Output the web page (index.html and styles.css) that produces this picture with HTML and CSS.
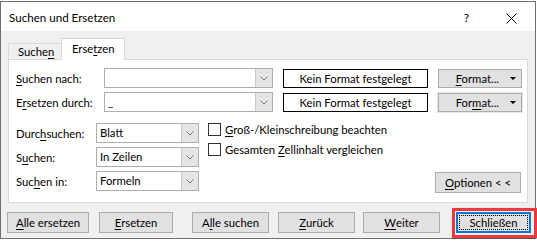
FILE: index.html
```html
<!DOCTYPE html>
<html lang="de">
<head>
    <meta charset="UTF-8" />
    <title>Suchen und Ersetzen</title>
    <link rel="stylesheet" href="styles.css">
</head>
<body>
    <div class="dialog">
        <div class="titlebar">
            <span class="title">Suchen und Ersetzen</span>
            <span class="help">?</span>
            <svg class="close" width="11" height="11" viewBox="0 0 11 11">
                <path d="M0.5 0.5 L10.5 10.5 M10.5 0.5 L0.5 10.5" stroke="#000" stroke-width="1" fill="none"/>
            </svg>
        </div>

        <div class="tabs">
            <div class="tab">Suche<u>n</u></div>
            <div class="tab active">Erse<u>t</u>zen</div>
        </div>

        <div class="panel">
            <div class="row">
                <label class="lbl"><u>S</u>uchen nach:</label>
                <div class="combo">
                    <span class="combo-text"></span>
                    <span class="drop"><svg width="8" height="5" viewBox="0 0 8 5"><path d="M0.5 0.5 L4 4 L7.5 0.5" stroke="#7a7a7a" fill="none"/></svg></span>
                </div>
                <div class="fmt-box">Kein Format festgelegt</div>
                <div class="btn fmt-btn"><span><u>F</u>ormat...</span><span class="tri"></span></div>
            </div>
            <div class="row">
                <label class="lbl">E<u>r</u>setzen durch:</label>
                <div class="combo">
                    <span class="combo-text">_</span>
                    <span class="drop"><svg width="8" height="5" viewBox="0 0 8 5"><path d="M0.5 0.5 L4 4 L7.5 0.5" stroke="#7a7a7a" fill="none"/></svg></span>
                </div>
                <div class="fmt-box">Kein Format festgelegt</div>
                <div class="btn fmt-btn second"><span>For<u>m</u>at...</span><span class="tri"></span></div>
            </div>

            <div class="lower">
                <div class="fields">
                    <div class="frow">
                        <label class="lbl2">Durc<u>h</u>suchen:</label>
                        <div class="select"><span class="combo-text">Blatt</span><span class="drop"><svg width="8" height="5" viewBox="0 0 8 5"><path d="M0.5 0.5 L4 4 L7.5 0.5" stroke="#7a7a7a" fill="none"/></svg></span></div>
                    </div>
                    <div class="frow">
                        <label class="lbl2">S<u>u</u>chen:</label>
                        <div class="select"><span class="combo-text">In Zeilen</span><span class="drop"><svg width="8" height="5" viewBox="0 0 8 5"><path d="M0.5 0.5 L4 4 L7.5 0.5" stroke="#7a7a7a" fill="none"/></svg></span></div>
                    </div>
                    <div class="frow">
                        <label class="lbl2">Suc<u>h</u>en in:</label>
                        <div class="select"><span class="combo-text">Formeln</span><span class="drop"><svg width="8" height="5" viewBox="0 0 8 5"><path d="M0.5 0.5 L4 4 L7.5 0.5" stroke="#7a7a7a" fill="none"/></svg></span></div>
                    </div>
                </div>
                <div class="checks">
                    <div class="check"><span class="box"></span><span><u>G</u>roß-/Kleinschreibung beachten</span></div>
                    <div class="check"><span class="box"></span><span>Gesamten <u>Z</u>ellinhalt vergleichen</span></div>
                </div>
                <div class="btn options"><span><u>O</u>ptionen &lt; &lt;</span></div>
            </div>
        </div>

        <div class="actions">
            <div class="btn b-alle-ers"><u>A</u>lle ersetzen</div>
            <div class="btn b-ers"><u>E</u>rsetzen</div>
            <div class="btn b-alle-such">A<u>l</u>le suchen</div>
            <div class="btn b-zur"><u>Z</u>urück</div>
            <div class="btn b-wei"><u>W</u>eiter</div>
            <div class="btn b-close">
                <span class="focus">Schließen</span>
                <span class="marker"></span>
            </div>
        </div>
    </div>
</body>
</html>
```

FILE: styles.css
```css
* {
    box-sizing: border-box;
}
body {
    margin: 0;
    background: #fff;
    font-family: Lato, 'Noto Sans', sans-serif;
    font-size: 11.3px;
    color: #000;
}
u {
    text-decoration-thickness: 1px;
    text-underline-offset: 2px;
}

/* Window frame */
.dialog {
    width: 536px;
    height: 238px;
    margin-top: 1px;
    border: 1px solid #707070;
    background: #f0f0f0;
}
.titlebar {
    height: 29px;
    background: #fff;
    display: flex;
    align-items: center;
    padding-left: 8px;
}
.title {
    flex: 1;
    margin-top: 2px;
    font-size: 11.6px;
}
.help {
    font-size: 12px;
    margin-right: 37px;
    margin-top: 2px;
}
.close {
    margin-right: 18px;
    margin-top: 3px;
}

/* Tabs */
.tabs {
    display: flex;
    align-items: flex-end;
    padding: 7px 0 0 7px;
    margin-bottom: -1px;
    position: relative;
    z-index: 1;
}
.tab {
    border: 1px solid #d9d9d9;
    border-bottom: none;
    height: 16px;
    width: 54px;
    margin-bottom: 1px;
    line-height: 16px;
    padding-left: 9px;
}
.tab.active {
    background: #fff;
    height: 22px;
    width: 64px;
    margin-bottom: 0;
    margin-left: -1px;
    padding-left: 10px;
    line-height: 19px;
}

/* Tab panel */
.panel {
    margin-left: 7px;
    width: 520px;
    height: 144px;
    background: #fff;
    border: 1px solid #d9d9d9;
    padding: 8px 0 0 7px;
}
.row {
    display: flex;
    align-items: center;
    height: 20px;
    margin-bottom: 4px;
}
.lbl {
    width: 88px;
}
.combo,
.select {
    display: flex;
    height: 20px;
    width: 169px;
    border: 1px solid #adadad;
    background: #fff;
}
.select {
    width: 103px;
}
.combo-text {
    flex: 1;
    padding-left: 3px;
    line-height: 18px;
}
.drop {
    width: 17px;
    background: #e5e5e5;
    border-left: 1px solid #c8c8c8;
    display: flex;
    align-items: center;
    justify-content: center;
}
.fmt-box {
    margin-left: 10px;
    width: 145px;
    height: 19px;
    border: 1px solid #000;
    text-align: center;
    line-height: 17px;
}

/* Buttons */
.btn {
    height: 21px;
    background: #e1e1e1;
    border: 1px solid #adadad;
    display: flex;
    align-items: center;
    justify-content: center;
}
.fmt-btn {
    margin-left: 10px;
    width: 84px;
    height: 19px;
    justify-content: flex-end;
    padding-right: 5px;
}
.fmt-btn.second {
    outline: 1px solid #e5e5e5;
}
.tri {
    width: 0;
    height: 0;
    border-left: 3px solid transparent;
    border-right: 3px solid transparent;
    border-top: 3px solid #000;
    margin-left: 11px;
}

/* Lower options */
.lower {
    display: flex;
    margin-top: 11px;
}
.frow {
    display: flex;
    align-items: center;
    margin-bottom: 4px;
}
.lbl2 {
    width: 80px;
}
.checks {
    margin-left: 9px;
}
.check {
    display: flex;
    align-items: center;
    height: 13px;
    margin-bottom: 7px;
}
.box {
    width: 13px;
    height: 13px;
    border: 1px solid #333;
    background: #fff;
    margin-right: 4px;
}
.options {
    margin-left: auto;
    margin-right: 6px;
    margin-top: 49px;
    width: 86px;
    height: 21px;
}

/* Bottom action buttons */
.actions {
    display: flex;
    padding: 9px 0 0 6px;
}
.b-alle-ers {
    width: 82px;
}
.b-ers {
    width: 74px;
    margin-left: 10px;
}
.b-alle-such {
    width: 77px;
    margin-left: 19px;
}
.b-zur {
    width: 77px;
    margin-left: 9px;
}
.b-wei {
    width: 77px;
    margin-left: 8px;
}
.b-close {
    position: relative;
    width: 75px;
    margin-left: 16px;
    border: 2px solid #0078d7;
    padding: 1px;
}
.focus {
    flex: 1;
    align-self: stretch;
    border: 1px dotted #000;
    display: flex;
    align-items: center;
    justify-content: center;
}
.marker {
    position: absolute;
    left: -6px;
    top: -6px;
    right: -8px;
    bottom: -7px;
    border: 3px solid #e8393e;
    box-shadow: 1px 1px 2px rgba(0, 0, 0, 0.35);
}
```
